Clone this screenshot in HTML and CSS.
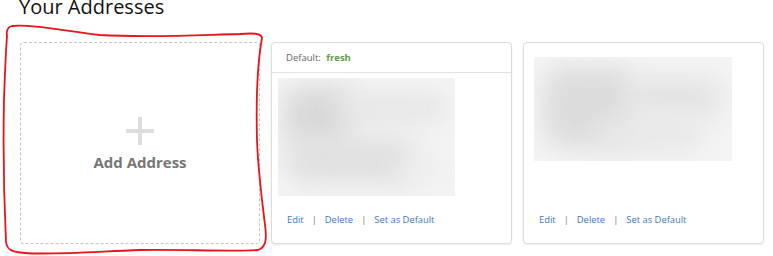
FILE: index.html
```html
<!DOCTYPE html>
<html lang="en">
<head>
  <meta charset="UTF-8" />
  <title>Your Addresses</title>
  <link rel="stylesheet" href="styles.css">
</head>
<body>
  <h1>Your Addresses</h1>
  <div class="cards">
    <div class="card add-card">
      <svg class="plus" width="28" height="28" viewBox="0 0 28 28">
        <rect x="12" y="0" width="4" height="28" fill="#dddddd"/>
        <rect x="0" y="12" width="28" height="4" fill="#dddddd"/>
      </svg>
      <span class="add-label">Add Address</span>
    </div>

    <div class="card">
      <div class="card-head">Default: <span class="brand">fresh</span></div>
      <div class="blurred blurred-a">
        <i class="spot s1"></i>
        <i class="spot s2"></i>
        <i class="spot s3"></i>
        <i class="spot s4"></i>
      </div>
      <div class="links">
        <a>Edit</a><span class="sep">|</span><a>Delete</a><span class="sep">|</span><a>Set as Default</a>
      </div>
    </div>

    <div class="card">
      <div class="blurred blurred-b">
        <i class="spot s5"></i>
        <i class="spot s6"></i>
        <i class="spot s7"></i>
      </div>
      <div class="links">
        <a>Edit</a><span class="sep">|</span><a>Delete</a><span class="sep">|</span><a>Set as Default</a>
      </div>
    </div>
  </div>

  <!-- hand drawn marker round the first card -->
  <svg class="marker" width="773" height="256" viewBox="0 0 773 256">
    <path d="M7 36 C6 30 8 27 12 26 C30 24 60 30 100 35 C150 38 200 35 240 34 C252 33 262 33 262 38 C258 60 256 100 257 140 C258 170 262 200 265 225 C267 240 266 247 258 250 C230 252 180 249 140 250 C90 252 50 255 25 253 C12 252 7 250 6 242 C4 200 3 150 4 100 C5 70 6 50 7 36 Z"
          fill="none" stroke="#e8141c" stroke-width="1.8" stroke-linejoin="round"/>
  </svg>
</body>
</html>
```

FILE: styles.css
```css
body {
  margin: 0;
  padding: 0 0 0 20px;
  background: #fff;
  color: #111;
  font-family: "Open Sans", sans-serif;
  position: relative;
  overflow: hidden;
  height: 256px;
}
h1 {
  font-size: 20px;
  font-weight: normal;
  line-height: 20px;
  margin: -3px 0 25px -1px;
}
.cards {
  display: flex;
  gap: 11px;
}
.card {
  flex-shrink: 0;
  width: 241px;
  height: 202px;
  box-sizing: border-box;
  border: 1px solid #dcdcdc;
  border-radius: 4px;
  box-shadow: 0 1px 2px rgba(0,0,0,0.08);
  display: flex;
  flex-direction: column;
  background: #fff;
}
.add-card {
  width: 240px;
  border: 1px dashed #c4c4c4;
  box-shadow: none;
  align-items: center;
  justify-content: center;
  gap: 7px;
  padding-top: 3px;
}
.add-label {
  font-size: 15px;
  font-weight: bold;
  color: #767676;
  line-height: 20px;
}
.card-head {
  height: 29px;
  border-bottom: 1px solid #e2e2e2;
  font-size: 9.5px;
  line-height: 30px;
  color: #666;
  padding-left: 14px;
}
.brand {
  color: #5e9c4c;
  font-weight: bold;
  margin-left: 3px;
}
.blurred {
  position: relative;
  overflow: hidden;
  background: #f4f4f4;
}
.blurred-a {
  margin: 5px 0 0 6px;
  width: 177px;
  height: 118px;
}
.blurred-b {
  margin: 14px 0 0 10px;
  width: 198px;
  height: 104px;
}
.spot {
  position: absolute;
  display: block;
  border-radius: 20px;
  filter: blur(12px);
}
.s1 { left: 5px; top: 8px; width: 70px; height: 60px; background: #d9d9d9; }
.s2 { left: 60px; top: 15px; width: 110px; height: 30px; background: #e6e6e6; }
.s3 { left: 8px; top: 60px; width: 130px; height: 45px; background: #e0e0e0; }
.s4 { left: 120px; top: 80px; width: 50px; height: 25px; background: #eeeeee; }
.s5 { left: 10px; top: 10px; width: 90px; height: 80px; background: #dcdcdc; }
.s6 { left: 90px; top: 20px; width: 100px; height: 40px; background: #e4e4e4; }
.s7 { left: 60px; top: 60px; width: 110px; height: 35px; background: #e8e8e8; }
.links {
  margin-top: auto;
  padding: 0 0 16px 15px;
  font-size: 9.4px;
  line-height: 14px;
  color: #3b77c0;
}
.sep {
  color: #8a7868;
  margin: 0 8px;
}
.marker {
  position: absolute;
  left: 0;
  top: 0;
  pointer-events: none;
}
```
